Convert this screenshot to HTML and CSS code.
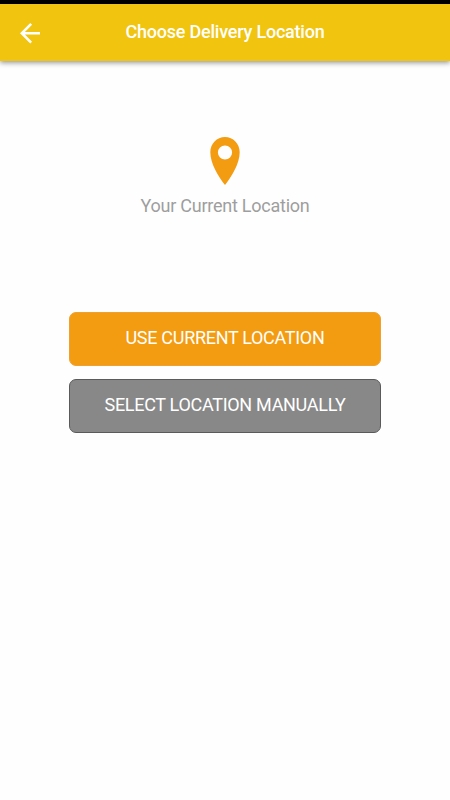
FILE: index.html
```
<!DOCTYPE html>
<html lang="en">
<head>
    <meta charset="UTF-8">
    <meta name="viewport" content="width=device-width, initial-scale=1.0">
    <title>Choose Delivery Location</title>
    <link rel="stylesheet" href="styles.css">
</head>
<body>
    <div class="status-bar"></div>

    <header class="header">
        <button class="back" aria-label="Back">
            <svg width="20.5" height="20.5" viewBox="4 4 16 16" fill="#fff">
                <path d="M20 11H7.83l5.59-5.59L12 4l-8 8 8 8 1.41-1.41L7.83 13H20v-2z"/>
            </svg>
        </button>
        <h1>Choose Delivery Location</h1>
    </header>

    <main class="content">
        <svg class="pin" width="30" height="48" viewBox="0 0 30 48">
            <path fill="#f39c12" fill-rule="evenodd" d="M15 0C6.8 0 .3 6.7.3 15.3.3 26.5 8.5 40 15 48c6.5-8 14.7-21.5 14.7-32.7C29.7 6.7 23.2 0 15 0zm0 8.4a7.1 7.1 0 1 1 0 14.2 7.1 7.1 0 0 1 0-14.2z"/>
        </svg>
        <p class="location">Your Current Location</p>

        <div class="buttons">
            <button class="btn current">USE CURRENT LOCATION</button>
            <button class="btn manual">SELECT LOCATION MANUALLY</button>
        </div>
    </main>
</body>
</html>
```

FILE: styles.css
```
body {
    margin: 0;
    min-height: 100vh;
    background: #fefefe;
    font-family: Roboto, "Liberation Sans", sans-serif;
}

button {
    border: none;
    font-family: inherit;
    cursor: pointer;
}

.status-bar {
    height: 4px;
    background: #000;
}

.header {
    display: grid;
    grid-template-columns: 60px 1fr 60px;
    align-items: center;
    height: 57px;
    background: #f1c40f;
    box-shadow: 0 2px 5px rgba(0,0,0,0.4);
}

.back {
    display: flex;
    padding: 2px 0 0 19.5px;
    background: none;
}

h1 {
    margin: 0;
    padding-bottom: 2px;
    color: white;
    font-size: 18px;
    font-weight: 500;
    line-height: 22px;
    letter-spacing: -0.22px;
    text-align: center;
}

.content {
    display: flex;
    flex-direction: column;
    align-items: center;
    padding-top: 76px;
}

.pin {
    display: block;
}

.location {
    margin: 10px 0 0;
    color: #9e9e9e;
    font-size: 18px;
    line-height: 22px;
    letter-spacing: -0.24px;
}

.buttons {
    display: flex;
    flex-direction: column;
    gap: 13px;
    width: 312px;
    margin-top: 95px;
}

.btn {
    box-sizing: border-box;
    height: 54px;
    padding: 0 0 3px;
    border-radius: 7px;
    color: white;
    font-size: 18px;
    letter-spacing: -0.3px;
}

.current {
    background: #f39c12;
    border: 1px solid #f0a030;
}

.manual {
    background: #888;
    border: 1px solid #5a5a5a;
}
```
